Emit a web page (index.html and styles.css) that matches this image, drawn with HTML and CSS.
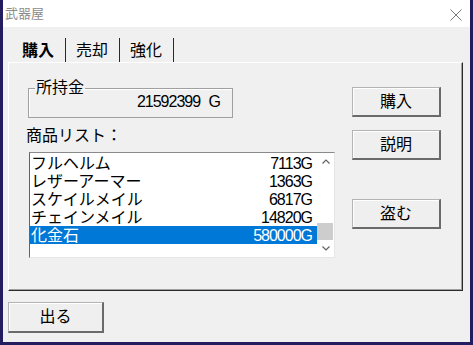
FILE: index.html
```html
<!DOCTYPE html>
<html lang="ja">
<head>
<meta charset="utf-8">
<title>武器屋</title>
<link rel="stylesheet" href="styles.css">
</head>
<body>
<div class="window">
  <div class="titlebar">
    <span class="title">武器屋</span>
    <svg class="close" width="12" height="12" viewBox="0 0 12 12"><path d="M0.5 0.5 L11.5 11.5 M11.5 0.5 L0.5 11.5" stroke="#7a7a7a" stroke-width="1" fill="none"/></svg>
  </div>
  <div class="client">
    <div class="tabs">
      <div class="tab active">購入</div>
      <div class="tab">売却</div>
      <div class="tab">強化</div>
    </div>
    <div class="panel">
      <div class="left">
        <fieldset class="money">
          <legend>所持金</legend>
          <div class="amount">21592399 G</div>
        </fieldset>
        <div class="list-label">商品リスト：</div>
        <div class="listbox">
          <div class="items">
            <div class="item"><span class="name">フルヘルム</span><span class="num">7113G</span></div>
            <div class="item"><span class="name">レザーアーマー</span><span class="num">1363G</span></div>
            <div class="item"><span class="name">スケイルメイル</span><span class="num">6817G</span></div>
            <div class="item"><span class="name">チェインメイル</span><span class="num">14820G</span></div>
            <div class="item selected"><span class="name">化金石</span><span class="num">580000G</span></div>
          </div>
          <div class="scrollbar">
            <div class="arrow"><svg width="8" height="5" viewBox="0 0 8 5"><path d="M0.5 4.5 L4 1 L7.5 4.5" stroke="#606060" stroke-width="1.2" fill="none"/></svg></div>
            <div class="track"><div class="thumb"></div></div>
            <div class="arrow"><svg width="8" height="5" viewBox="0 0 8 5"><path d="M0.5 0.5 L4 4 L7.5 0.5" stroke="#606060" stroke-width="1.2" fill="none"/></svg></div>
          </div>
        </div>
      </div>
      <div class="right">
        <button class="btn b1">購入</button>
        <button class="btn b2">説明</button>
        <button class="btn b3">盗む</button>
      </div>
    </div>
    <div class="footer">
      <button class="btn exit">出る</button>
    </div>
  </div>
</div>
</body>
</html>
```
FILE: styles.css
```css
* { box-sizing: border-box; }
html, body { margin: 0; padding: 0; }
body {
  width: 473px;
  height: 345px;
  overflow: hidden;
  font-family: "Liberation Sans", "Noto Sans CJK JP", sans-serif;
  font-size: 16px;
  color: #000;
}
.window {
  width: 473px;
  height: 345px;
  border-left: 3px solid #231c5e;
  border-right: 3px solid #231c5e;
  border-bottom: 3px solid #231c5e;
  background: #f0f0f0;
  display: flex;
  flex-direction: column;
}
.titlebar {
  height: 27px;
  background: #fff;
  display: flex;
  align-items: center;
  justify-content: space-between;
  padding: 0 8px 0 2px;
}
.title {
  font-size: 13px;
  color: #8c8c8c;
  line-height: 15px;
}
.close { display: block; margin-top: 2px; }
.client {
  flex: 1;
  display: flex;
  flex-direction: column;
}
.tabs {
  display: flex;
  margin-top: 11px;
  margin-left: 9px;
  height: 24px;
}
.tab {
  width: 54px;
  height: 24px;
  line-height: 20px;
  padding-top: 3px;
  padding-left: 10px;
  border-right: 1px solid #2a2a2a;
}
.tab.active {
  font-weight: bold;
}
.panel {
  margin-left: 5px;
  width: 455px;
  height: 229px;
  border-top: 1px solid #fff;
  border-left: 1px solid #fff;
  border-right: 1px solid #2a2a2a;
  border-bottom: 1px solid #2a2a2a;
  box-shadow: inset -1px -1px 0 #a0a0a0;
  display: flex;
  padding-left: 19px;
}
.left {
  width: 306px;
  padding-top: 16px;
}
.money {
  margin: 0;
  width: 205px;
  padding: 0 12px 6px 6px;
  border: 1px solid #a0a0a0;
  box-shadow: inset 1px 1px 0 #fff;
}
.money legend {
  padding: 0 1px;
  line-height: 18px;
  font-size: 16px;
}
.amount {
  text-align: right;
  line-height: 18px;
  margin-top: -4px;
  letter-spacing: -1px;
  word-spacing: 5px;
}
.list-label {
  margin-top: 9px;
  margin-left: -2px;
  line-height: 18px;
}
.listbox {
  margin-top: 7px;
  margin-left: 1px;
  width: 306px;
  height: 106px;
  border-top: 1px solid #8a8a8a;
  border-left: 1px solid #646464;
  border-right: 1px solid #e6e6e6;
  border-bottom: 1px solid #e6e6e6;
  background: #fff;
  display: flex;
}
.items {
  flex: 1;
  padding-top: 1px;
}
.item {
  height: 18px;
  line-height: 17px;
  padding: 1px 5px 0 1px;
  display: flex;
  justify-content: space-between;
}
.item.selected {
  background: #0078d7;
  color: #fff;
}
.num { letter-spacing: -1px; }
.scrollbar {
  width: 17px;
  display: flex;
  flex-direction: column;
  background: #fff;
}
.arrow {
  height: 17px;
  display: flex;
  align-items: center;
  justify-content: center;
}
.track {
  flex: 1;
  display: flex;
  flex-direction: column;
  justify-content: flex-end;
}
.thumb {
  height: 17px;
  width: 16px;
  background: #cdcdcd;
}
.right {
  padding-top: 24px;
  margin-left: 18px;
  display: flex;
  flex-direction: column;
}
.btn {
  font-family: "Liberation Sans", "Noto Sans CJK JP", sans-serif;
  font-size: 16px;
  color: #000;
  background: #efefef;
  border-top: 1px solid #b4b4b4;
  border-left: 1px solid #b4b4b4;
  border-right: 2px solid #6a6a6a;
  border-bottom: 2px solid #6a6a6a;
  box-shadow: inset 1px 1px 0 #fff;
  padding: 0;
  line-height: 18px;
  width: 89px;
  height: 30px;
}
.b2 { margin-top: 13px; }
.b3 { margin-top: 39px; }
.footer {
  padding-left: 5px;
  padding-top: 11px;
}
.exit {
  width: 96px;
  height: 31px;
}
```
